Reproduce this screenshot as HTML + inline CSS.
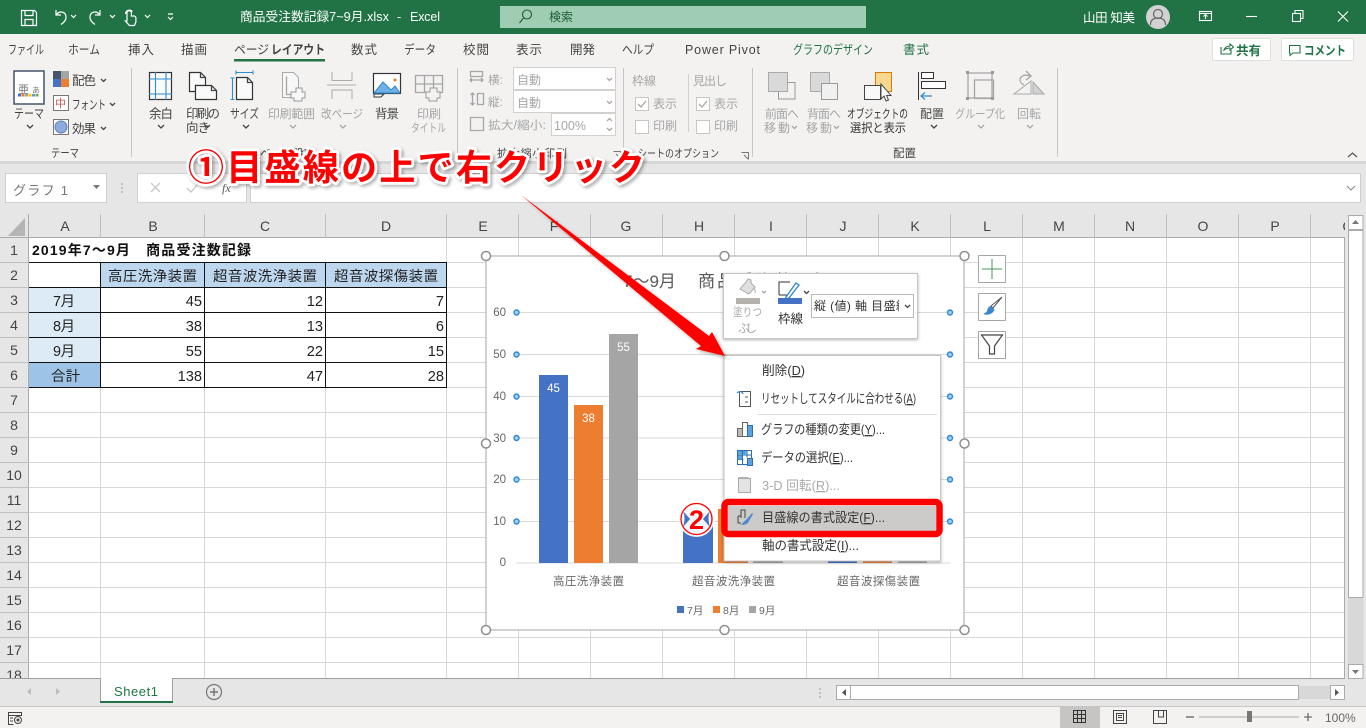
<!DOCTYPE html>
<html lang="ja"><head><meta charset="utf-8"><title>Excel</title>
<style>
html,body{margin:0;padding:0;background:#fff;width:1366px;height:728px;overflow:hidden}
svg{display:block}
text{font-family:"Liberation Sans","Noto Sans CJK JP",sans-serif;font-size:12px;fill:#444}
.t text{font-size:12.5px;fill:#444}
.g text{fill:#a6a6a6}
.r text{font-size:14px;fill:#444;text-anchor:middle}
.c text{font-size:14.4px;fill:#222}
.n text{font-size:14.6px;fill:#222;text-anchor:end}
.m text{font-size:13px;fill:#333}
.a text{font-size:11.5px;fill:#666;text-anchor:end}
.i{fill:none;stroke:#444;stroke-width:1.3}
.ig{fill:none;stroke:#a6a6a6;stroke-width:1.3}
</style></head><body>
<svg width="1366" height="728" viewBox="0 0 1366 728" xmlns="http://www.w3.org/2000/svg">
<defs>
<filter id="sh" x="-5%" y="-20%" width="110%" height="140%"><feDropShadow dx="2" dy="2" stdDeviation="1.5" flood-color="#000" flood-opacity=".3"/></filter>
<filter id="ms" x="-5%" y="-5%" width="110%" height="110%"><feDropShadow dx="0" dy="1" stdDeviation="1.5" flood-color="#000" flood-opacity=".3"/></filter>
</defs>
<rect width="1366" height="728" fill="#fff"/>

<!-- title bar -->
<rect width="1366" height="34" fill="#217346"/>
<g fill="none" stroke="#fff" stroke-width="1.2">
<path d="M21.500 10.500h13l2 2v13h-15z M25 10.500v5h8v-5 M25 25.500v-6h8v6"/>
<path d="M56 10v5h5 M56.500 14.500c3-4 9-3 9.500 2 .4 3.500-2 6-5 8"/>
<path d="M108 10v5h-5 M107.500 14.500c-3-4-9-3-9.500 2-.4 3.500 2 6 5 8" transform="translate(-8,0)"/>
<path d="M127 21v-8a2.200 2.200 0 0 1 4.400 0v3h2.500a2 2 0 0 1 2 2v4l-1.500 3.500h-5l-4-4.500z M125.500 14a4 4 0 0 1 7-2.500"/>
<path d="M71 15l2.500 2.500 2.500-2.500 M110 15l2.500 2.500 2.500-2.500 M145 15l2.500 2.500 2.500-2.500 M168 17l2.500 2.500 2.500-2.500 M168 14h5"/>
</g>
<text x="240" y="21" style="fill:#fff;font-size:12.500px" textLength="149" lengthAdjust="spacingAndGlyphs">商品受注数記録7~9月.xlsx</text>
<text x="397" y="21" style="fill:#fff;font-size:12.500px">-</text>
<text x="410" y="21" style="fill:#fff;font-size:12.500px" textLength="30">Excel</text>
<rect x="500" y="6" width="366" height="22" fill="#9fcdb3"/>
<circle cx="527" cy="14.500" r="4.500" fill="none" stroke="#1e5c3a" stroke-width="1.100"/><path d="M523.500 18l-4 5" stroke="#1e5c3a" stroke-width="1.100"/>
<text x="549" y="21" style="fill:#1e5c3a;font-size:12px">検索</text>
<text x="1083" y="22" style="fill:#fff;font-size:12.500px" textLength="52">山田 知美</text>
<circle cx="1158" cy="17" r="12" fill="#d2d2d2"/>
<circle cx="1158" cy="14" r="4.500" fill="none" stroke="#666" stroke-width="1.200"/><path d="M1150.500 25c0-5 3-7 7.500-7s7.500 2 7.500 7" fill="none" stroke="#666" stroke-width="1.200"/>
<g fill="none" stroke="#fff" stroke-width="1.100">
<rect x="1199.500" y="11.500" width="12" height="9"/><path d="M1199 13.500h13 M1205.500 19v-4 M1203.500 16.500l2-2 2 2"/>
<path d="M1246 16.500h11"/>
<rect x="1292.500" y="13.500" width="8" height="8"/><path d="M1295 13v-2.500h8v8h-2.500"/>
<path d="M1338 11.500l10 10 M1348 11.500l-10 10"/>
</g>

<!-- ribbon -->
<rect y="34" width="1366" height="127" fill="#f3f2f1"/>
<rect y="161" width="1366" height="53" fill="#e6e6e6"/>
<rect y="161" width="1366" height="3" fill="#d6d6d6"/>
<g class="t">
<text x="8" y="54" textLength="36" lengthAdjust="spacingAndGlyphs">ファイル</text>
<text x="68" y="54" textLength="32" lengthAdjust="spacingAndGlyphs">ホーム</text>
<text x="128" y="54" textLength="26">挿入</text>
<text x="181" y="54" textLength="26">描画</text>
<text x="234" y="54" textLength="35" lengthAdjust="spacingAndGlyphs">ページ</text>
<text x="271" y="54" textLength="54" lengthAdjust="spacingAndGlyphs" style="font-weight:700;fill:#444">レイアウト</text>
<text x="351" y="54" textLength="26">数式</text>
<text x="404" y="54" textLength="32" lengthAdjust="spacingAndGlyphs">データ</text>
<text x="463" y="54" textLength="26">校閲</text>
<text x="516" y="54" textLength="26">表示</text>
<text x="570" y="54" textLength="25">開発</text>
<text x="622" y="54" textLength="32" lengthAdjust="spacingAndGlyphs">ヘルプ</text>
<text x="685" y="54" textLength="75">Power Pivot</text>
<text x="793" y="54" textLength="80" lengthAdjust="spacingAndGlyphs" style="fill:#217346">グラフのデザイン</text>
<text x="903" y="54" textLength="26" style="fill:#217346">書式</text>
</g>
<rect x="234" y="59" width="91" height="2.500" fill="#217346"/>
<!-- share / comment -->
<rect x="1212.500" y="38.500" width="58" height="22" fill="#fff" stroke="#e1dfdd" rx="1"/>
<rect x="1281.500" y="38.500" width="72" height="22" fill="#fff" stroke="#e1dfdd" rx="1"/>
<path d="M1221 47v7h10v-4 M1224 50c1-3 3-4 6-4v-2l3.500 3-3.500 3v-2c-2 0-4 .5-6 2z" fill="none" stroke="#217346" stroke-width="1.100"/>
<text x="1236" y="55" style="fill:#217346;font-weight:700;font-size:12.500px" textLength="25">共有</text>
<path d="M1289.500 45.500h10.500v7.500h-7l-3 2.500v-2.500h-.5z" fill="none" stroke="#217346" stroke-width="1.100"/>
<text x="1304" y="55" style="fill:#217346;font-weight:700;font-size:12.500px" textLength="42" lengthAdjust="spacingAndGlyphs">コメント</text>

<!-- group separators -->
<path d="M131.500 68v89 M457.500 68v89 M623.500 68v89 M752.500 68v89 M1057.500 68v89" stroke="#c8c6c4"/>
<path d="M688.500 74v58" stroke="#d2d0ce"/>

<!-- theme -->
<rect x="14" y="71" width="30" height="33" fill="#fff" stroke="#44546a" stroke-width="1.500"/>
<text x="18" y="93" style="font-size:11px;fill:#777">亜</text><text x="32" y="93" style="font-size:8px;fill:#777">あ</text>
<path d="M18 94h3v2.500h-3z" fill="#4472c4"/><path d="M21.500 94h3v2.500h-3z" fill="#ed7d31"/><path d="M25 94h3v2.500h-3z" fill="#a5a5a5"/><path d="M28.500 94h3v2.500h-3z" fill="#ffc000"/><path d="M32 94h3v2.500h-3z" fill="#5b9bd5"/><path d="M35.500 94h3v2.500h-3z" fill="#70ad47"/>
<g class="t">
<text x="14" y="118" textLength="30" lengthAdjust="spacingAndGlyphs">テーマ</text>
<text x="51" y="157" style="font-size:11.500px" textLength="28" lengthAdjust="spacingAndGlyphs">テーマ</text>
<text x="72" y="85" textLength="24">配色</text><text x="72" y="109" textLength="34" lengthAdjust="spacingAndGlyphs">フォント</text><text x="72" y="133" textLength="24">効果</text>
</g>
<rect x="53" y="71" width="8" height="8" fill="#44546a"/><rect x="61" y="71" width="8" height="8" fill="#a5a5a5"/><rect x="53" y="79" width="8" height="8" fill="#4472c4"/><rect x="61" y="79" width="8" height="8" fill="#ed7d31"/>
<rect x="53.500" y="95.500" width="15" height="15" fill="#fff" stroke="#777"/><text x="55" y="107" style="font-size:11px;fill:#c55">中</text>
<rect x="53.500" y="119.500" width="15" height="15" fill="#fff" stroke="#777"/><circle cx="61" cy="127" r="6" fill="#8faadc" stroke="#5b7fbd"/>
<path class="i" d="M27 125l3 3 3-3 M101 79l2.500 2.500 2.500-2.500 M110 103l2.500 2.500 2.500-2.500 M101 127l2.500 2.500 2.500-2.500"/>

<!-- page setup icons -->
<rect x="149.500" y="72.500" width="22" height="27" fill="#fafafa" stroke="#333" stroke-width="1.200"/>
<path d="M155.500 72v28 M166 72v28 M149 79h23 M149 94h23" stroke="#2e8bd0" stroke-width="1.100"/>
<path d="M189.500 72.500h11l5 5v8h-10v6h-6z" fill="#fafafa" stroke="#333" stroke-width="1.200"/><path d="M200.500 72.500v5h5" class="i"/>
<path d="M195.500 85.500h16l5 5v9h-21z" fill="#fafafa" stroke="#333" stroke-width="1.200"/><path d="M211.500 85.500v5h5" class="i"/>
<path d="M236.500 77.500h11l5 5v17h-16z" fill="#fafafa" stroke="#333" stroke-width="1.200"/><path d="M247.500 77.500v5h5" class="i"/>
<path d="M232.500 78v21 M230.500 78h4 M230.500 99.500h4 M236 72.500h17 M236 70.500v4 M253 70.500v4" stroke="#2e8bd0" stroke-width="1.100" fill="none"/>
<path d="M282.500 72.500h11l5 5v20h-16z" fill="#f7f7f7" stroke="#aaa"/><path d="M286.500 76.500v18h8" class="ig"/>
<path d="M296 88h6v4h3v6h-3v3h-8v-3h-3v-6h5z" fill="#f7f7f7" stroke="#999"/>
<path d="M332 72v8.500h20V72 M327 85h29 M332 99v-9h20v9" fill="none" stroke="#aaa"/>
<rect x="373.500" y="73.500" width="27" height="20" fill="#fff" stroke="#333" stroke-width="1.200"/>
<path d="M374 93l9-11 8 8 4-4 5 7z" fill="#6fb1e4" stroke="#2e8bd0"/><circle cx="395" cy="80" r="1.500" fill="#ed7d31"/>
<path d="M374 94v3h7l3-3z" fill="#fff" stroke="#333"/>
<path d="M415.500 75.500h27v17h-27z M424.500 75v18 M433.500 75v18 M415 84h28" class="ig"/>
<path d="M430 88h7v4h3v6h-3v3h-8v-3h-3v-6h4z" fill="#f3f2f1" stroke="#999"/>
<g class="t">
<text x="149" y="118" textLength="24">余白</text>
<text x="186" y="118" textLength="34">印刷の</text><text x="186" y="132" textLength="24">向き</text>
<text x="230" y="118" textLength="29" lengthAdjust="spacingAndGlyphs">サイズ</text>
<text x="375" y="118" textLength="24">背景</text>
</g>
<g class="g">
<text x="268" y="118" textLength="47" lengthAdjust="spacingAndGlyphs">印刷範囲</text>
<text x="321" y="118" textLength="42" lengthAdjust="spacingAndGlyphs">改ページ</text>
<text x="417" y="118" textLength="24">印刷</text>
<text x="411" y="132" textLength="35" lengthAdjust="spacingAndGlyphs">タイトル</text>
<text x="488" y="84" style="font-size:11.500px">横:</text><text x="488" y="106" style="font-size:11.500px">縦:</text>
<text x="488" y="129" style="font-size:11.500px" textLength="58" lengthAdjust="spacingAndGlyphs">拡大/縮小:</text>
<text x="632" y="85" textLength="24">枠線</text><text x="693" y="85" textLength="34">見出し</text>
<text x="653" y="108">表示</text><text x="653" y="130">印刷</text>
<text x="714" y="108">表示</text><text x="714" y="130">印刷</text>
<text x="765" y="118" textLength="34">前面へ</text><text x="764" y="132" textLength="26">移動</text>
<text x="807" y="118" textLength="34">背面へ</text><text x="806" y="132" textLength="26">移動</text>
<text x="955" y="118" textLength="50" lengthAdjust="spacingAndGlyphs">グループ化</text>
<text x="1017" y="118" textLength="24">回転</text>
</g>
<path class="i" d="M158 125l3 3 3-3 M205 125l2.500 2.500 2.500-2.500 M243 125l3 3 3-3 M931 125l3 3 3-3" />
<path class="ig" d="M290 125l3 3 3-3 M340 125l3 3 3-3 M792 126l2.500 2.500 2.500-2.500 M834 126l2.500 2.500 2.500-2.500 M978 125l3 3 3-3 M1027 125l3 3 3-3"/>

<!-- scale -->
<path class="ig" d="M470.500 71.500h12v5h-12z M470 80h13 M472 78l-2 2 2 2 M481 78l2 2-2 2 M472.500 93v12 M470.500 95l2-2 2 2 M470.500 103l2 2 2-2 M477.500 93.500h6v11h-6z M470.500 117.500h13v13h-13z"/>
<rect x="513.500" y="67.500" width="102" height="22" fill="#fff" stroke="#d2d0ce"/>
<rect x="513.500" y="90.500" width="102" height="22" fill="#fff" stroke="#d2d0ce"/>
<rect x="551.500" y="113.500" width="64" height="22" fill="#fff" stroke="#d2d0ce"/>
<text x="517" y="84" style="fill:#a6a6a6;font-size:12px">自動</text><text x="517" y="107" style="fill:#a6a6a6;font-size:12px">自動</text><text x="554" y="130" style="fill:#a6a6a6;font-size:12.500px">100%</text>
<path class="ig" d="M607 78l2.500 2.500 2.500-2.500 M607 101l2.500 2.500 2.500-2.500 M607 121l2.500-2.500 2.500 2.500 M607 128l2.500 2.500 2.500-2.500"/>
<!-- checkboxes -->
<g fill="#fff" stroke="#c8c6c4"><rect x="635.500" y="97.500" width="13" height="13"/><rect x="635.500" y="120.500" width="13" height="13"/><rect x="696.500" y="97.500" width="13" height="13"/><rect x="696.500" y="120.500" width="13" height="13"/></g>
<path class="ig" d="M638 104l3 3 5-6 M699 104l3 3 5-6"/>
<path d="M741.500 153.500h7v7M744 156l4 4" fill="none" stroke="#777" transform="translate(0,-1)"/>
<path d="M614.500 152.500h7v7M617 155l4 4" fill="none" stroke="#777" transform="translate(-1,-1)"/>
<g class="t"><text x="638" y="157" style="font-size:11px" textLength="81" lengthAdjust="spacingAndGlyphs">シートのオプション</text><text x="497" y="157" style="font-size:11px" textLength="70">拡大縮小印刷</text><text x="260" y="157" style="font-size:11px">ページ設定</text><text x="893" y="157" style="font-size:11.500px">配置</text></g>
<!-- arrange icons -->
<rect x="768.500" y="72.500" width="19" height="19" fill="#d9d9d9" stroke="#aaa"/><path d="M787 82.500h8v16.500h-16.500v-7" fill="none" stroke="#999"/>
<rect x="810.500" y="72.500" width="19" height="19" fill="#d9d9d9" stroke="#aaa"/><rect x="821.500" y="83.500" width="16" height="16" fill="#f0f0f0" stroke="#999"/>
<rect x="875.500" y="72.500" width="16" height="19" fill="#f8d88f" stroke="#e07b00"/>
<rect x="864.500" y="85.500" width="16" height="14" fill="#f8f8f8" stroke="#444"/>
<path d="M881 84v15l3-3 2 5 2.500-1-2-4.500h4.500z" fill="#fff" stroke="#444"/>
<text x="847" y="118" style="fill:#333" textLength="61" lengthAdjust="spacingAndGlyphs">オブジェクトの</text><text x="850" y="132" style="fill:#333" textLength="56" lengthAdjust="spacingAndGlyphs">選択と表示</text>
<path d="M918.500 72v28" stroke="#333"/><rect x="921.500" y="72.500" width="12" height="6" fill="#fff" stroke="#333"/><rect x="921.500" y="81.500" width="24" height="7" fill="#fff" stroke="#333"/>
<path d="M921 96h11 M925 92.500l-4 3.500 4 3.500" fill="none" stroke="#2e8bd0" stroke-width="1.200"/>
<text x="920" y="118" style="fill:#444" textLength="24">配置</text>
<path class="ig" d="M968 73h24v25h-24z M974.500 80h19v18.500h-19z"/>
<path d="M966 71h3v3h-3z M991 71h3v3h-3z M966 97h3v3h-3z M991 97h3v3h-3z" fill="#999"/>
<path d="M1014 94l17-13v13z" fill="none" stroke="#aaa"/><path d="M1033 82l11 12h-11z" fill="#d2d2d2" stroke="#aaa"/><path class="ig" d="M1030 76c-5-2-10 0-10 4 0 2 2 4 4 5 M1026 71l5 5-5 4"/>
<path d="M1348 157l4.500-4 4.500 4" fill="none" stroke="#555" stroke-width="1.200"/>

<!-- formula bar -->
<rect x="5.500" y="173.500" width="101" height="29" fill="#fff" stroke="#d2d0ce"/>
<text x="13" y="195" style="font-size:13px;fill:#777" textLength="55">グラフ 1</text>
<path d="M93 185h7l-3.500 4z" fill="#777"/>
<path d="M122 183v2 M122 187v2 M122 191v2" stroke="#999"/>
<rect x="137.500" y="173.500" width="109" height="29" fill="#fff" stroke="#d2d0ce"/>
<rect x="250.500" y="173.500" width="1110" height="29" fill="#fff" stroke="#d2d0ce"/>
<path d="M151 183l9 9 M160 183l-9 9" stroke="#c8c8c8" stroke-width="1.300"/>
<path d="M187 188l4 4 7-8" stroke="#c8c8c8" stroke-width="1.300" fill="none"/>
<text x="222" y="192" style="font-family:'Liberation Serif',serif;font-style:italic;font-size:12px;fill:#555">fx</text>
<path d="M1347 186l4 4 4-4" fill="none" stroke="#888"/>

<!-- headers -->
<rect y="214" width="1345" height="24" fill="#e6e6e6"/>
<rect y="238" width="29" height="440" fill="#e6e6e6"/>
<path d="M25 218v18h-17z" fill="#b4b4b4"/>
<path d="M0 237.500h1345 M28.500 214v464" stroke="#ababab"/>
<g stroke="#c0c0c0"><path d="M100.500 214v24 M204.500 214v24 M325.500 214v24 M446.500 214v24 M518.500 214v24 M590.500 214v24 M662.500 214v24 M734.500 214v24 M806.500 214v24 M878.500 214v24 M950.500 214v24 M1022.500 214v24 M1094.500 214v24 M1166.500 214v24 M1238.500 214v24 M1310.500 214v24"/></g>
<g stroke="#c0c0c0"><path d="M0 262.500h29 M0 287.500h29 M0 312.500h29 M0 337.500h29 M0 362.500h29 M0 387.500h29 M0 412.500h29 M0 437.500h29 M0 462.500h29 M0 487.500h29 M0 512.500h29 M0 537.500h29 M0 562.500h29 M0 587.500h29 M0 612.500h29 M0 637.500h29 M0 662.500h29"/></g>
<g class="r">
<text x="65" y="231">A</text><text x="153" y="231">B</text><text x="265" y="231">C</text><text x="386" y="231">D</text><text x="483" y="231">E</text><text x="554" y="231">F</text><text x="626" y="231">G</text><text x="699" y="231">H</text><text x="771" y="231">I</text><text x="843" y="231">J</text><text x="915" y="231">K</text><text x="987" y="231">L</text><text x="1059" y="231">M</text><text x="1130" y="231">N</text><text x="1203" y="231">O</text><text x="1275" y="231">P</text><text x="1348" y="231">Q</text>
<text x="14" y="255">1</text><text x="14" y="280">2</text><text x="14" y="305">3</text><text x="14" y="330">4</text><text x="14" y="355">5</text><text x="14" y="380">6</text><text x="14" y="405">7</text><text x="14" y="430">8</text><text x="14" y="455">9</text><text x="14" y="480">10</text><text x="14" y="505">11</text><text x="14" y="530">12</text><text x="14" y="555">13</text><text x="14" y="580">14</text><text x="14" y="605">15</text><text x="14" y="630">16</text><text x="14" y="655">17</text><text x="14" y="680">18</text>
</g>

<!-- grid lines -->
<g stroke="#d8d8d8">
<path d="M29 262.500h1316 M29 287.500h1316 M29 312.500h1316 M29 337.500h1316 M29 362.500h1316 M29 387.500h1316 M29 412.500h1316 M29 437.500h1316 M29 462.500h1316 M29 487.500h1316 M29 512.500h1316 M29 537.500h1316 M29 562.500h1316 M29 587.500h1316 M29 612.500h1316 M29 637.500h1316 M29 662.500h1316"/>
<path d="M100.500 238v440 M204.500 238v440 M325.500 238v440 M446.500 238v440 M518.500 238v440 M590.500 238v440 M662.500 238v440 M734.500 238v440 M806.500 238v440 M878.500 238v440 M950.500 238v440 M1022.500 238v440 M1094.500 238v440 M1166.500 238v440 M1238.500 238v440 M1310.500 238v440"/>
</g>
<rect x="29" y="238" width="417" height="24" fill="#fff"/>

<!-- table -->
<rect x="101" y="263" width="345" height="24" fill="#bdd7ee"/>
<rect x="29" y="288" width="71" height="74" fill="#ddebf7"/>
<rect x="29" y="363" width="71" height="24" fill="#9dc3e6"/>
<rect x="29" y="263" width="71" height="24" fill="#fff"/>
<rect x="101" y="288" width="345" height="99" fill="#fff"/>
<path d="M29 262.500h418 M29 287.500h418 M29 312.500h418 M29 337.500h418 M29 362.500h418 M29 387.500h418 M100.500 262v126 M204.500 262v126 M325.500 262v126 M446.500 262v126" stroke="#111"/>
<text x="32" y="255" style="font-size:14px;font-weight:700;fill:#111" textLength="219">2019年7〜9月　商品受注数記録</text>
<g class="c">
<text x="108" y="281" textLength="89">高圧洗浄装置</text>
<text x="213" y="281" textLength="104">超音波洗浄装置</text>
<text x="334" y="281" textLength="104">超音波探傷装置</text>
<text x="53" y="306" textLength="22">7月</text><text x="53" y="331" textLength="22">8月</text><text x="53" y="356" textLength="22">9月</text>
<text x="51" y="381" textLength="29">合計</text>
</g>
<g class="n">
<text x="202" y="306">45</text><text x="323" y="306">12</text><text x="444" y="306">7</text>
<text x="202" y="331">38</text><text x="323" y="331">13</text><text x="444" y="331">6</text>
<text x="202" y="356">55</text><text x="323" y="356">22</text><text x="444" y="356">15</text>
<text x="202" y="381">138</text><text x="323" y="381">47</text><text x="444" y="381">28</text>
</g>

<!-- chart -->
<rect x="486" y="256" width="478" height="374" fill="#fff" stroke="#a6a6a6" stroke-width="1"/>
<text x="623" y="287" style="font-size:17px;fill:#595959">7〜9月</text>
<text x="698" y="287" style="font-size:17px;fill:#595959" textLength="132">商品受注数記録</text>
<g stroke="#d9d9d9"><path d="M516 312.500h434 M516 354.500h434 M516 396.500h434 M516 438h434 M516 479.500h434 M516 521.500h434 M516 563h434"/></g>
<rect x="539" y="375" width="29" height="188" fill="#4472c4"/><rect x="574" y="405" width="29" height="158" fill="#ed7d31"/><rect x="609" y="334" width="29" height="229" fill="#a5a5a5"/>
<rect x="683" y="513" width="30" height="50" fill="#4472c4"/><rect x="718" y="509" width="30" height="54" fill="#ed7d31"/><rect x="753" y="471" width="30" height="92" fill="#a5a5a5"/>
<rect x="828" y="534" width="29" height="29" fill="#4472c4"/><rect x="863" y="538" width="29" height="25" fill="#ed7d31"/><rect x="898" y="500" width="29" height="63" fill="#a5a5a5"/>
<text x="553.500" y="392" text-anchor="middle" style="fill:#fff;font-size:11.500px">45</text><text x="588.500" y="422" text-anchor="middle" style="fill:#fff;font-size:11.500px">38</text><text x="623.500" y="351" text-anchor="middle" style="fill:#fff;font-size:11.500px">55</text>
<g class="a"><text x="506" y="316">60</text><text x="506" y="358">50</text><text x="506" y="400">40</text><text x="506" y="442">30</text><text x="506" y="483">20</text><text x="506" y="525">10</text><text x="506" y="566">0</text></g>
<text x="553" y="585" style="font-size:11.500px;fill:#666" textLength="71">高圧洗浄装置</text>
<text x="692" y="585" style="font-size:11.500px;fill:#666" textLength="83">超音波洗浄装置</text>
<text x="837" y="585" style="font-size:11.500px;fill:#666" textLength="83">超音波探傷装置</text>
<rect x="677" y="606" width="7" height="7" fill="#4472c4"/><text x="687" y="614" style="font-size:10.500px;fill:#666">7月</text>
<rect x="713" y="606" width="7" height="7" fill="#ed7d31"/><text x="723" y="614" style="font-size:10.500px;fill:#666">8月</text>
<rect x="749" y="606" width="7" height="7" fill="#a5a5a5"/><text x="759" y="614" style="font-size:10.500px;fill:#666">9月</text>
<g fill="#9fd0f5" stroke="#2e86d8" stroke-width="1.400">
<circle cx="516.500" cy="312.500" r="2.500"/><circle cx="516.500" cy="354.500" r="2.500"/><circle cx="516.500" cy="396.500" r="2.500"/><circle cx="516.500" cy="438" r="2.500"/><circle cx="516.500" cy="479.500" r="2.500"/><circle cx="516.500" cy="521.500" r="2.500"/>
<circle cx="950" cy="312.500" r="2.500"/><circle cx="950" cy="354.500" r="2.500"/><circle cx="950" cy="396.500" r="2.500"/><circle cx="950" cy="438" r="2.500"/><circle cx="950" cy="479.500" r="2.500"/><circle cx="950" cy="521.500" r="2.500"/>
</g>
<g fill="#fff" stroke="#8f8f8f" stroke-width="1.500">
<circle cx="486" cy="256" r="4.500"/><circle cx="724.500" cy="256" r="4.500"/><circle cx="964.500" cy="256" r="4.500"/><circle cx="486" cy="443.500" r="4.500"/><circle cx="964.500" cy="443.500" r="4.500"/><circle cx="486" cy="630" r="4.500"/><circle cx="724.500" cy="630" r="4.500"/><circle cx="964.500" cy="630" r="4.500"/>
</g>
<!-- chart side buttons -->
<g fill="#fff" stroke="#a6a6a6"><rect x="978.500" y="255.500" width="27" height="27"/><rect x="978.500" y="293.500" width="27" height="27"/><rect x="978.500" y="331.500" width="27" height="27"/></g>
<path d="M992 259v20 M982 269h20" stroke="#3f9b57"/>
<path d="M1002 297l-9 11-2-2z" fill="#fff" stroke="#555"/><path d="M990.500 306c-3 1-3 4-4 6l-3 2c4 2 10 0 11-5z" fill="#3a86d0"/>
<path d="M981.500 335h21l-8 11v8h-5v-8z" fill="#fff" stroke="#444" stroke-width="1.200"/>

<!-- mini toolbar -->
<rect x="723.500" y="273.500" width="194" height="65" fill="#fff" stroke="#c8c6c4" filter="url(#ms)"/>
<path d="M740 289l6-7 2-3 3 1 0 3 4 4-5 6c-1 1-2 1-3 0z" fill="#e0e0e0" stroke="#aaa"/>
<path d="M754 288c1 2 2 3 1 5" fill="none" stroke="#aaa"/>
<rect x="736" y="298" width="24" height="6" fill="#b5b1ac"/>
<path class="ig" d="M762 291l2 2 2-2"/>
<text x="733" y="316" style="font-size:11.500px;fill:#aaa" textLength="29" lengthAdjust="spacingAndGlyphs">塗りつ</text><text x="738" y="332" style="font-size:11.500px;fill:#aaa" textLength="19">ぶし</text>
<path d="M779 295v-13h11 M779 295h9" fill="none" stroke="#333"/><path d="M786 297l10-14 3 2-10 13-4 1z" fill="#fff" stroke="#2e86d0" stroke-width="1.300"/>
<rect x="778" y="298" width="24" height="6" fill="#4472c4"/>
<path class="i" d="M804 291l2.500 2.500 2.500-2.500"/>
<text x="778" y="323" style="font-size:12.500px;fill:#333" textLength="25">枠線</text>
<rect x="811.500" y="294.500" width="102" height="23" fill="#fff" stroke="#bbb"/>
<text x="814" y="310" style="font-size:12px;fill:#333" textLength="94">縦 (値) 軸 目盛線</text>
<rect x="899" y="296" width="14" height="20" fill="#fff"/>
<path class="i" d="M905 305l2.500 2.500 2.500-2.500"/>

<!-- context menu -->
<rect x="724" y="355.500" width="216.500" height="205.500" fill="#fff" stroke="#c8c6c4" filter="url(#ms)"/>
<path d="M757 414.500h180" stroke="#e1dfdd"/>
<rect x="728" y="506" width="208" height="25" fill="#cdcbc9"/>
<g class="m">
<text x="762" y="375" textLength="43" lengthAdjust="spacingAndGlyphs">削除(<tspan text-decoration="underline">D</tspan>)</text>
<text x="761" y="403" textLength="155" lengthAdjust="spacingAndGlyphs">リセットしてスタイルに合わせる(<tspan text-decoration="underline">A</tspan>)</text>
<text x="761" y="434" textLength="124" lengthAdjust="spacingAndGlyphs">グラフの種類の変更(<tspan text-decoration="underline">Y</tspan>)...</text>
<text x="761" y="462" textLength="92" lengthAdjust="spacingAndGlyphs">データの選択(<tspan text-decoration="underline">E</tspan>)...</text>
<text x="762" y="490" textLength="78" lengthAdjust="spacingAndGlyphs" style="fill:#aaa">3-D 回転(<tspan text-decoration="underline">R</tspan>)...</text>
<text x="762" y="522" textLength="123" lengthAdjust="spacingAndGlyphs">目盛線の書式設定(<tspan text-decoration="underline">F</tspan>)...</text>
<text x="762" y="550" textLength="97" lengthAdjust="spacingAndGlyphs">軸の書式設定(<tspan text-decoration="underline">I</tspan>)...</text>
</g>
<!-- menu icons -->
<path d="M739.500 391.500h11v15h-11z" fill="#fff" stroke="#555"/><path d="M737 393c2-2 5-2 6 1" fill="none" stroke="#2e86d0" stroke-width="1.200"/><path d="M745 397h3 M745 402h3" stroke="#555"/>
<rect x="737.500" y="428.500" width="5" height="8" fill="#bbb" stroke="#666"/><rect x="742.500" y="422.500" width="5" height="14" fill="#fff" stroke="#666"/><rect x="747.500" y="425.500" width="5" height="11" fill="#5ba3e0" stroke="#2e6da8"/>
<rect x="737.500" y="450.500" width="14" height="14" fill="#fff" stroke="#2e6da8"/><path d="M737.500 455h14 M737.500 459.500h6 M742.500 450.500v14 M747 450.500v7" stroke="#2e6da8"/><path d="M738 451h4v4h-4z M743 451h4v4h-4z M738 455.500h4v4h-4z" fill="#5ba3e0"/><rect x="747.500" y="458.500" width="5" height="7" fill="#5ba3e0" stroke="#2e6da8"/>
<rect x="738.500" y="478.500" width="12" height="14" fill="#e4e4e4" stroke="#aaa"/><path d="M738 478c3-1 9-1 13 1" stroke="#aaa" fill="none"/>
<path d="M738 516v7h3 M741 516h-3 M741 518v-8h4v8" fill="none" stroke="#444"/><path d="M752 513l-6 7c-2 1-3 3-5 5 4 0 7-1 8-4l4-7z" fill="#4a8ad0"/>

<!-- annotation red frame -->
<rect x="724.500" y="502" width="215" height="32" rx="4" fill="none" stroke="#f00" stroke-width="6.500"/>
<circle cx="696.500" cy="519" r="18" fill="#fff" opacity=".93"/>
<circle cx="696.500" cy="519" r="15.500" fill="none" stroke="#f00" stroke-width="1.300"/>
<path d="M683 511c2 4 2 10 0 16l7-8z M710 511c-2 4-2 10 0 16l-7-8z" fill="#4472c4"/>
<text x="696.500" y="529" text-anchor="middle" style="font-family:'Liberation Sans',sans-serif;font-size:27px;font-weight:700;fill:#f00;stroke:#fff;stroke-width:2px;paint-order:stroke">2</text>

<!-- arrow -->
<path d="M521 195L709 336l3-4 13 24-29-7 5-3z" fill="#f00" filter="url(#sh)"/>

<!-- headline annotation -->
<text x="188" y="180" textLength="457" filter="url(#sh)" style="font-family:'Liberation Sans','Noto Sans CJK JP',sans-serif;font-size:36px;font-weight:700;fill:#f00;stroke:#fff;stroke-width:5.500px;stroke-linejoin:round;paint-order:stroke">①目盛線の上で右クリック</text>

<!-- vertical scrollbar -->
<rect x="1345" y="214" width="21" height="465" fill="#e6e6e6"/>
<path d="M1344.500 238v440" stroke="#ababab"/>
<rect x="1348" y="230" width="15.500" height="434" fill="#d8d8d8"/>
<rect x="1348.500" y="215.500" width="14.500" height="14" fill="#fff" stroke="#ababab"/><path d="M1352 224l3.500-4 3.500 4z" fill="#777"/>
<rect x="1348.500" y="230.500" width="14.500" height="367" fill="#fff" stroke="#ababab"/>
<rect x="1348.500" y="664.500" width="14.500" height="14" fill="#fff" stroke="#ababab"/><path d="M1352 670l3.500 4 3.500-4z" fill="#777"/>

<!-- tabs -->
<rect y="679" width="1366" height="28" fill="#e6e6e6"/>
<path d="M0 678.500h1345" stroke="#9f9f9f"/>
<path d="M0 706.500h1366" stroke="#c6c6c6"/>
<rect x="100" y="678" width="72" height="24" fill="#fff"/>
<path d="M100.500 678v24 M172.500 678v24" stroke="#9f9f9f"/>
<rect x="100" y="701" width="73" height="2" fill="#217346"/>
<text x="114" y="696" style="font-size:13px;fill:#217346" textLength="44">Sheet1</text>
<path d="M31 688v7l-4-3.500z M56 688v7l4-3.500z" fill="#bbb"/>
<circle cx="214" cy="692" r="7.500" fill="none" stroke="#777" stroke-width="1.200"/><path d="M214 688v8 M210 692h8" stroke="#777" stroke-width="1.500"/>
<path d="M820 688v2 M820 692v2 M820 696v2" stroke="#999"/>
<rect x="836.500" y="685.500" width="14" height="14" fill="#fff" stroke="#ababab"/><path d="M846 689v7l-4-3.500z" fill="#555"/>
<rect x="850.500" y="685.500" width="448" height="14" fill="#fff" stroke="#ababab"/>
<rect x="1299" y="686" width="31" height="13" fill="#d8d8d8"/>
<rect x="1330.500" y="685.500" width="14" height="14" fill="#fff" stroke="#ababab"/><path d="M1335 689v7l4-3.500z" fill="#555"/>

<!-- status bar -->
<rect y="707" width="1366" height="21" fill="#f3f2f1"/>
<path d="M8.500 712.500h13v3h-13z M8.500 715.500v9h5" fill="none" stroke="#444"/><path d="M10 718h3 M10 721h3" stroke="#444"/><circle cx="18" cy="720" r="3.500" fill="none" stroke="#444"/><circle cx="18" cy="720" r="1.500" fill="#444"/>
<rect x="1060" y="707" width="40" height="21" fill="#c6c5c3"/>
<path d="M1073.500 710.500h12v12h-12z M1077.500 710.500v12 M1081.500 710.500v12 M1073.500 714.500h12 M1073.500 718.500h12" fill="none" stroke="#333"/>
<path d="M1113.500 710.500h13v13h-13z M1116.500 713.500h7v7h-7z M1118 715.500h4 M1118 517.500h4" fill="none" stroke="#444" style="display:none"/>
<path d="M1113.500 710.500h13v13h-13z M1116.500 713.500h7v7h-7z M1118 715.500h4 M1118 717.500h4" fill="none" stroke="#444"/>
<path d="M1153.500 710.500h13v13h-13z M1158.500 710.500v6.500h5v-6.500" fill="none" stroke="#444"/>
<path d="M1186 717h8" stroke="#555" stroke-width="1.200"/>
<path d="M1199 717h100" stroke="#aaa"/>
<rect x="1247" y="711" width="5" height="11" fill="#777"/>
<path d="M1304 717h8 M1308 713v8" stroke="#555" stroke-width="1.100"/>
<text x="1325" y="722" style="font-size:12px;fill:#666">100%</text>
</svg>
</body></html>
